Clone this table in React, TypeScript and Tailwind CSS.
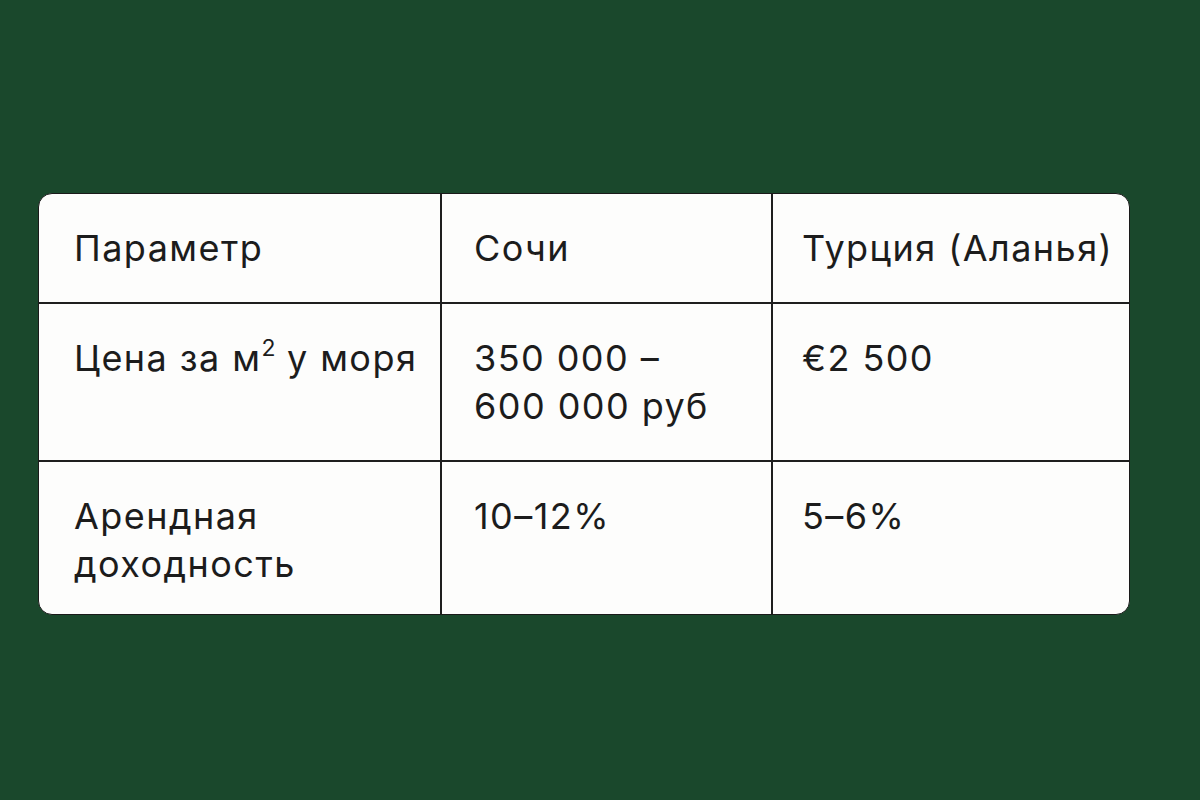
import React from "react";

export default function App() {
  const cell = "px-[35px] py-[30px] text-[36px] leading-[48px] tracking-[0.04em] text-[#1c1c1c]";
  return (
    <div className="w-[1200px] h-[800px] bg-[#1a482c] flex items-start" style={{ fontFamily: "Inter, 'Noto Sans', sans-serif" }}>
      <div className="mt-[193px] ml-[38px] w-[1092px] bg-[#fdfdfc] rounded-[14px] border border-[#1a1a1a] overflow-hidden grid grid-cols-[403px_331px_356px]">
        <div className={`${cell} border-r-2 border-b-2 border-[#1e1e1e]`}>Параметр</div>
        <div className={`${cell} border-r-2 border-b-2 border-[#1e1e1e] pl-[32px]`}>Сочи</div>
        <div className={`${cell} border-b-2 border-[#1e1e1e] pl-[29px] pr-[6px] whitespace-nowrap`}>Турция (Аланья)</div>

        <div className={`${cell} border-r-2 border-b-2 border-[#1e1e1e] pr-[6px] whitespace-nowrap`}>
          Цена за м<sup className="text-[23px] tracking-normal top-[-0.65em]">2</sup> у моря
        </div>
        <div className={`${cell} border-r-2 border-b-2 border-[#1e1e1e] pl-[32px]`}>350 000 –<br />600 000 руб</div>
        <div className={`${cell} border-b-2 border-[#1e1e1e] pl-[29px]`}>€2 500</div>

        <div className={`${cell} border-r-2 border-[#1e1e1e] pb-[26px]`}>Арендная<br />доходность</div>
        <div className={`${cell} border-r-2 border-[#1e1e1e] pl-[32px]`}>10–12%</div>
        <div className={`${cell} pl-[29px]`}>5–6%</div>
      </div>
    </div>
  );
}
